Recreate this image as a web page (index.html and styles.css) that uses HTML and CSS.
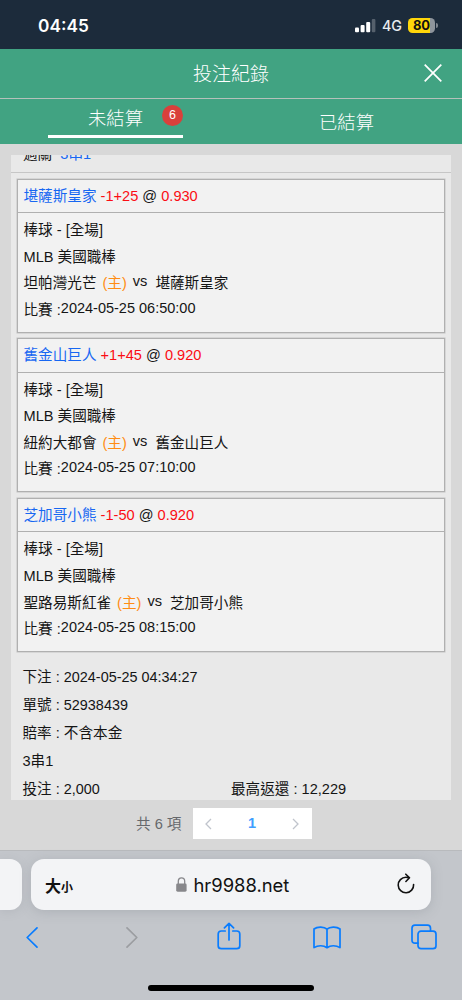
FILE: index.html
```
<!DOCTYPE html>
<html lang="zh-Hant">
<head>
<meta charset="utf-8">
<title>投注紀錄</title>
<link rel="stylesheet" href="styles.css">
</head>
<body>
<div class="phone">
  <div class="status">
    <span class="clock">04:45</span>
    <div class="status-right">
      <svg class="signal" width="21" height="14" viewBox="0 0 21 14" fill="#fff"><rect x="0" y="8.5" width="4" height="4.7" rx="1"/><rect x="5.6" y="6" width="4" height="7.2" rx="1"/><rect x="11.2" y="3" width="4" height="10.2" rx="1"/><rect x="16.8" y="0" width="3.6" height="13.2" rx="1" opacity=".25"/></svg>
      <span class="net">4G</span>
      <span class="battery">80</span><i class="battery-tip"></i>
    </div>
  </div>
  <header class="title-bar">
    <h1>投注紀錄</h1>
    <svg class="close" width="18" height="18" viewBox="0 0 18 18" fill="none" stroke="#fff" stroke-width="1.7"><path d="M.7.7 17.3 17.3M17.3.7.7 17.3"/></svg>
  </header>
  <nav class="tabs">
    <div class="tab"><div class="tab-active">未結算<span class="badge">6</span></div></div>
    <div class="tab tab-right">已結算</div>
  </nav>
  <main class="page">
    <section class="panel">
      <div class="parlay"><span>過關&nbsp;&nbsp;<b>3串1</b></span></div>
      <div class="cards">
        <article class="card">
          <div class="card-head"><span class="team">堪薩斯皇家</span> <span class="odds">-1+25</span> @ <span class="odds">0.930</span></div>
          <div class="card-body">
            <p>棒球 - [全場]</p><p>MLB 美國職棒</p>
            <p class="match"><span>坦帕灣光芒</span><span class="home">(主)</span><span class="vs">vs</span><span>堪薩斯皇家</span></p>
            <p class="time"><span>比賽 :</span><span class="date">2024-05-25 06:50:00</span></p>
          </div>
        </article>
        <article class="card">
          <div class="card-head"><span class="team">舊金山巨人</span> <span class="odds">+1+45</span> @ <span class="odds">0.920</span></div>
          <div class="card-body">
            <p>棒球 - [全場]</p><p>MLB 美國職棒</p>
            <p class="match"><span>紐約大都會</span><span class="home">(主)</span><span class="vs">vs</span><span>舊金山巨人</span></p>
            <p class="time"><span>比賽 :</span><span class="date">2024-05-25 07:10:00</span></p>
          </div>
        </article>
        <article class="card">
          <div class="card-head"><span class="team">芝加哥小熊</span> <span class="odds">-1-50</span> @ <span class="odds">0.920</span></div>
          <div class="card-body">
            <p>棒球 - [全場]</p><p>MLB 美國職棒</p>
            <p class="match"><span>聖路易斯紅雀</span><span class="home">(主)</span><span class="vs">vs</span><span>芝加哥小熊</span></p>
            <p class="time"><span>比賽 :</span><span class="date">2024-05-25 08:15:00</span></p>
          </div>
        </article>
      </div>
      <div class="summary">
        <p>下注 : <span class="num">2024-05-25 04:34:27</span></p>
        <p>單號 : <span class="num">52938439</span></p>
        <p>賠率 : 不含本金</p>
        <p>3串1</p>
        <p class="amounts"><span>投注 : <span class="num">2,000</span></span><span>最高返還 : 12,229</span></p>
      </div>
    </section>
    <div class="pagination">
      <span class="total">共 6 項</span>
      <div class="pager">
        <svg width="7" height="12" viewBox="0 0 7 12" fill="none" stroke="#c0c4cc" stroke-width="1.3"><path d="M6 1 1 6l5 5"/></svg>
        <b>1</b>
        <svg width="7" height="12" viewBox="0 0 7 12" fill="none" stroke="#c0c4cc" stroke-width="1.3"><path d="m1 1 5 5-5 5"/></svg>
      </div>
    </div>
  </main>
  <footer class="safari">
    <div class="address-row">
      <div class="prev-tab"></div>
      <div class="address">
        <span class="size">大<small>小</small></span>
        <span class="url"><svg width="11" height="15" viewBox="0 0 11 15"><path d="M2.3 7V4.2C2.3 2 3.6.8 5.5.8S8.700 2 8.700 4.200V7" fill="none" stroke="#87878b" stroke-width="1.3"/><rect x=".2" y="6.400" width="10.400" height="8.300" rx="1.400" fill="#87878b"/></svg>hr9988.net</span>
        <svg class="reload" width="18" height="21" viewBox="0 0 18 21" fill="none" stroke="#111" stroke-width="1.6" stroke-linecap="round" stroke-linejoin="round"><path d="M16.600 11.500a7.700 7.700 0 1 1-7.700-7.200c1 0 2 .1 3 .4M8.800 1.200l3.700 3.600-3.600 3.700"/></svg>
      </div>
    </div>
    <div class="tools">
      <svg width="12" height="21" viewBox="0 0 12 21" stroke="#087cff"><path d="M11 .9 1.200 10.500 11 20.100"/></svg>
      <svg width="12" height="21" viewBox="0 0 12 21" stroke="#9b9da1"><path d="m1 .9 9.800 9.600L1 20.100"/></svg>
      <svg class="share" width="24" height="28" viewBox="0 0 24 28" stroke="#087cff"><path d="M8.200 9H4.300Q1.200 9 1.200 12v11.700q0 3 3.100 3h15.400q3.100 0 3.100-3V12q0-3-3.100-3h-3.900M12 18V1.400M7.400 5.900 12 1.300l4.600 4.600"/></svg>
      <svg width="28" height="23" viewBox="0 0 28 23" stroke="#087cff"><path d="M14 21.700V3.200C11.300.5 4.400.2 1 3v18.600c4-2.500 9.500-2.500 13 .1 3.500-2.600 9-2.600 13-.1V3C23.600.2 16.700.5 14 3.200"/></svg>
      <svg width="26" height="26" viewBox="0 0 26 26" stroke="#087cff"><rect x="7" y="7.200" width="18" height="17.500" rx="3"/><path d="M7 19.200H4q-3 0-3-3V4.200q0-3 3-3h12.500q3 0 3 3v3"/></svg>
    </div>
    <div class="home-bar"></div>
  </footer>
</div>
</body>
</html>
```
FILE: styles.css
```
* { box-sizing: border-box; }
body, p, h1 { margin: 0; }
body {
  font-family: "Liberation Sans", "Noto Sans CJK TC", sans-serif;
  font-size: 14.6px;
  color: #151515;
}
svg { display: block; flex: none; }
.phone { width: 462px; height: 1000px; display: flex; flex-direction: column; overflow: hidden; background: #d8d8d8; }

.status { height: 49px; flex: none; background: #1c2b3b; color: #fff; display: flex; justify-content: space-between; padding: 0 24px 0 38px; }
.clock { font: 600 17.3px/51px Inter, sans-serif; }
.status-right { display: flex; align-items: center; height: 51px; }
.net { font: 500 14.3px/51px Inter, sans-serif; margin: 0 6px 0 6px; color: #e8ebee; }
.battery { width: 27px; height: 15px; border-radius: 4.5px; background: linear-gradient(90deg, #ffd60a 82%, #8e959c 82%); color: #111; font: 700 13px/15px Inter, sans-serif; text-align: center; }
.battery-tip { width: 2px; height: 5px; margin-left: 1px; border-radius: 0 2px 2px 0; background: #7e868f; }

.title-bar { height: 50px; flex: none; background: #41a382; border-bottom: 1.5px solid #b5c1bb; color: #fff; position: relative; }
.title-bar h1 { font-size: 19px; font-weight: 300; line-height: 51px; text-align: center; }
.close { position: absolute; right: 20px; top: 15px; }

.tabs { height: 45px; flex: none; background: #41a382; color: #fff; display: grid; grid-template-columns: 1fr 1fr; font-size: 18.3px; font-weight: 300; }
.tab { display: flex; justify-content: center; }
.tab-active { width: 135px; height: 39px; border-bottom: 3px solid #fff; line-height: 40px; text-align: center; position: relative; }
.tab-right { line-height: 47px; }
.badge { position: absolute; right: 0; top: 6px; width: 21px; height: 21px; border-radius: 50%; background: #d9403b; font: 12.5px/21px "Liberation Sans", sans-serif; }

.page { height: 706px; flex: none; padding: 11px 11px 0; }
.panel { height: 645px; background: #e9e9e9; overflow: hidden; }
.parlay { height: 18px; border-bottom: 1px solid #c6c6c6; overflow: hidden; padding-left: 12px; display: flex; align-items: flex-end; line-height: 22px; }
.parlay span { margin-bottom: 7px; }
.parlay b { color: #1767f2; font-weight: 400; }
.cards { padding: 5.500px 6px 0 5.500px; display: flex; flex-direction: column; gap: 5.700px; }
.card { height: 154px; border: 1px solid #b0b0b0; background: #f2f2f2; box-shadow: 0 0 0 .5px #c4c4c4; }
.card-head { height: 33.500px; border-bottom: 1px solid #b0b0b0; padding-left: 6px; line-height: 33px; }
.team { color: #1767f2; }
.odds { color: #fb0d14; }
.card-body { padding: 4px 0 0 6px; line-height: 26.600px; }
.card-body p { height: 26.600px; }
.match, .time { display: flex; }
.home { color: #ff8c12; margin-left: 6px; }
.vs { margin: -2px 8px 0 6px; }
.date { margin-top: -2px; font-size: 14.500px; }
.summary { padding: 11px 12px 0 11.500px; line-height: 28px; }
.summary p { height: 28px; }
.num { font-size: 14.400px; }
.amounts { display: grid; grid-template-columns: 208.500px 1fr; }

.pagination { display: flex; align-items: center; padding: 8px 0 0 125px; color: #66686c; }
.total { width: 57px; white-space: nowrap; font-size: 14.600px; margin-top: -3px; }
.pager { width: 119px; height: 31px; background: #fff; display: flex; align-items: center; justify-content: space-between; padding: 0 13px 0 12px; }
.pager b { color: #409eff; font-size: 14.500px; margin-top: -1px; }

.safari { flex: 1; background: #c3c6cb; border-top: 1px solid #b8babd; }
.address-row { height: 67px; padding-top: 8px; display: flex; gap: 9px; }
.prev-tab { width: 22px; height: 51px; border-radius: 0 12px 12px 0; background: #f3f4f6; box-shadow: 0 2px 10px #7b80882e; }
.address { width: 400px; height: 51px; border-radius: 13px; background: #f3f4f6; box-shadow: 0 2px 12px #7b80884d; display: grid; grid-template-columns: 130.500px 1fr 18px; align-items: center; padding: 0 16px 0 14px; }
.size { font-size: 16px; font-weight: 700; color: #111; }
.size small { font-size: 12px; }
.url { display: flex; align-items: center; gap: 7px; font: 18.400px Inter, sans-serif; color: #111; }
.reload { margin-top: -2px; }
.tools { height: 38px; display: grid; grid-template-columns: 100px 91px 95.500px 98.500px 26px; align-items: center; padding-left: 26px; }
.tools svg { fill: none; stroke-width: 1.700; stroke-linecap: round; stroke-linejoin: round; }
.tools .share { margin-top: -2px; }
.home-bar { width: 166px; height: 6px; margin: 29px 0 0 148px; border-radius: 3px; background: #000; }
```
